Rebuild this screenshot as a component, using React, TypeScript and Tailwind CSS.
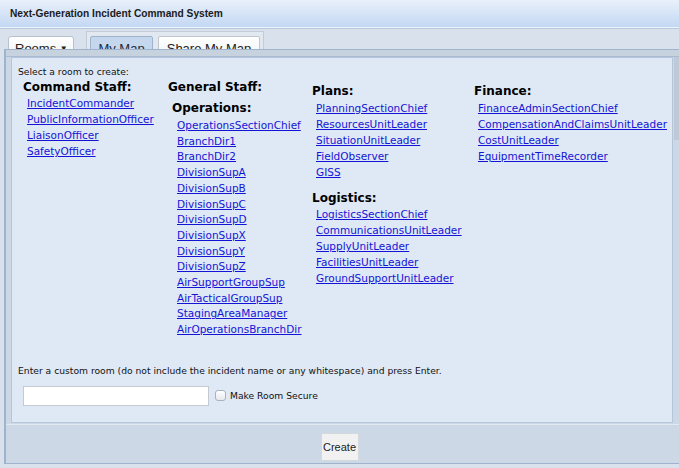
import React from "react";

const command = ["IncidentCommander", "PublicInformationOfficer", "LiaisonOfficer", "SafetyOfficer"];
const operations = [
  "OperationsSectionChief",
  "BranchDir1",
  "BranchDir2",
  "DivisionSupA",
  "DivisionSupB",
  "DivisionSupC",
  "DivisionSupD",
  "DivisionSupX",
  "DivisionSupY",
  "DivisionSupZ",
  "AirSupportGroupSup",
  "AirTacticalGroupSup",
  "StagingAreaManager",
  "AirOperationsBranchDir",
];
const plans = ["PlanningSectionChief", "ResourcesUnitLeader", "SituationUnitLeader", "FieldObserver", "GISS"];
const logistics = [
  "LogisticsSectionChief",
  "CommunicationsUnitLeader",
  "SupplyUnitLeader",
  "FacilitiesUnitLeader",
  "GroundSupportUnitLeader",
];
const finance = [
  "FinanceAdminSectionChief",
  "CompensationAndClaimsUnitLeader",
  "CostUnitLeader",
  "EquipmentTimeRecorder",
];

function Links({ items, className = "" }: { items: string[]; className?: string }) {
  return (
    <ul className={className}>
      {items.map((n) => (
        <li key={n}>
          <a href="#" className="text-[#1414d6] underline decoration-1 underline-offset-1">
            {n}
          </a>
        </li>
      ))}
    </ul>
  );
}

function Heading({ children, className = "" }: { children: React.ReactNode; className?: string }) {
  return <div className={`text-[12px] font-bold leading-[16px] text-black ${className}`}>{children}</div>;
}

export default function App() {
  return (
    <div className="relative w-[679px] h-[468px] overflow-hidden bg-[#dde4ec] font-['Liberation_Sans',Arial,sans-serif]">
      {/* title bar */}
      <div className="h-[28px] flex items-center pl-[10px] bg-gradient-to-b from-[#e9f0fa] to-[#c3d8f3] border-b border-[#eef4fb]">
        <span className="text-[10.2px] font-bold text-[#1b1b1b]">Next-Generation Incident Command System</span>
      </div>

      {/* toolbar */}
      <div className="h-[440px] bg-[#d9e2ec] border-t border-[#b7c8dc]">
        <div className="flex items-start pt-[1px]">
          <button className="ml-[8px] mt-[6px] h-[26px] w-[66px] rounded-[3px] border border-[#b8c2cc] bg-gradient-to-b from-white to-[#eef0f2] text-[13px] text-[#222] pl-[6px] text-left">
            Rooms <span className="text-[8px] align-[2px]">▼</span>
          </button>
          <div className="ml-[12px] mt-[1px] flex gap-[5px] border border-[#c3ccd6] bg-[#e2e8ef] px-[3px] pt-[4px] h-[30px]">
            <button className="h-[26px] w-[63px] rounded-[2px] border border-[#9fb4cc] bg-[#c4d7ed] text-[13px] text-[#1e2d40]">
              My Map
            </button>
            <button className="h-[26px] w-[102px] rounded-[2px] border border-[#c0c6cc] bg-gradient-to-b from-white to-[#eceff2] text-[13px] text-[#222]">
              Share My Map
            </button>
          </div>
        </div>
      </div>

      {/* dialog */}
      <div className="absolute left-[4px] top-[49px] right-0 h-[415px] flex flex-col border-t border-l-2 border-b border-[#9fb3cc] bg-[#cdd8e6]">
        <div className="h-[7px] bg-[#c6d2dd] border-b border-[#a9bbd0]" />
        <div className="flex flex-1">
          <div className="ml-[5px] w-[663px] h-[366px] bg-[#dfe8f5] border border-[#b4c5dc] pl-[6px] pt-[7px] font-['DejaVu_Sans',Verdana,sans-serif]">
            <div className="text-[9.2px] leading-[14px] text-[#111]">Select a room to create:</div>
            <div className="flex text-[10.5px] leading-[16px]">
              <div className="w-[150px] pl-[5px]">
                <Heading>Command Staff:</Heading>
                <Links items={command} className="pl-[4px]" />
              </div>
              <div className="w-[144px]">
                <Heading>General Staff:</Heading>
                <Heading className="pl-[4px] mt-[5px]">Operations:</Heading>
                <Links items={operations} className="pl-[9px] mt-[2px] leading-[15.7px]" />
              </div>
              <div className="w-[162px] pt-[4px]">
                <Heading>Plans:</Heading>
                <Links items={plans} className="pl-[4px] mt-[1px]" />
                <Heading className="mt-[10px]">Logistics:</Heading>
                <Links items={logistics} className="pl-[4px]" />
              </div>
              <div className="pt-[4px]">
                <Heading>Finance:</Heading>
                <Links items={finance} className="pl-[4px] mt-[1px]" />
              </div>
            </div>
            <div className="mt-[26px] text-[9.2px] leading-[14px] text-[#111]">
              Enter a custom room (do not include the incident name or any whitespace) and press Enter.
            </div>
            <div className="mt-[8px] flex items-center pl-[5px]">
              <input className="h-[20px] w-[186px] border border-[#c3cad2] bg-white" />
              <span className="ml-[6px] h-[11px] w-[11px] rounded-[3px] border border-[#a9b2bc] bg-gradient-to-b from-white to-[#e6e9ec]" />
              <span className="ml-[4px] text-[9.2px] text-[#111]">Make Room Secure</span>
            </div>
          </div>
          <div className="ml-[1px] w-[5px] h-[83px] bg-[#c0cad6]" />
        </div>
        <div className="h-[39px] flex justify-center items-start pr-[6px] pt-[8px] border-t border-[#e3e9f1]">
          <button className="h-[28px] w-[38px] border border-[#d4d9de] bg-[#f1f1f1] text-[11px] text-[#222]">
            Create
          </button>
        </div>
      </div>
    </div>
  );
}
